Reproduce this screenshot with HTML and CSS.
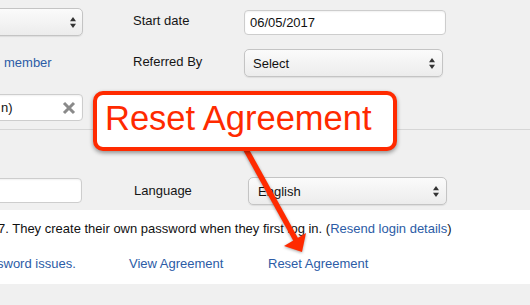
FILE: index.html
```html
<!DOCTYPE html>
<html>
<head>
	<title>Member details</title>
	<link rel="stylesheet" href="styles.css">
</head>
<body>
	<div class="form form-top">
		<div class="row row-1">
			<div class="select select-left">
				<span></span>
				<svg class="updown" width="6" height="11" viewBox="0 0 6 11"><polygon points="0,4.2 3,0 6,4.2"/><polygon points="0,6.8 3,11 6,6.8"/></svg>
			</div>
			<label class="label">Start date</label>
			<div class="input input-date">06/05/2017</div>
		</div>
		<div class="row row-2">
			<a href="#" class="link link-member">member</a>
			<label class="label">Referred By</label>
			<div class="select select-ref">
				<span>Select</span>
				<svg class="updown" width="6" height="11" viewBox="0 0 6 11"><polygon points="0,4.2 3,0 6,4.2"/><polygon points="0,6.8 3,11 6,6.8"/></svg>
			</div>
		</div>
		<div class="row row-3">
			<div class="input input-search">
				<span>n)</span>
				<svg class="clear" width="14" height="14" viewBox="0 0 14 14"><path d="M2 2 L12 12 M12 2 L2 12"/></svg>
			</div>
		</div>
	</div>

	<div class="divider"></div>

	<div class="form form-bottom">
		<div class="row row-4">
			<div class="input input-left"></div>
			<label class="label">Language</label>
			<div class="select select-lang">
				<span>English</span>
				<svg class="updown" width="6" height="11" viewBox="0 0 6 11"><polygon points="0,4.2 3,0 6,4.2"/><polygon points="0,6.8 3,11 6,6.8"/></svg>
			</div>
		</div>
	</div>

	<div class="info">
		<p class="note">7. They create their own password when they first log in. (<a href="#" class="link">Resend login details</a>)</p>
		<div class="links">
			<a href="#" class="link">sword issues.</a>
			<a href="#" class="link">View Agreement</a>
			<a href="#" class="link">Reset Agreement</a>
		</div>
	</div>

	<svg class="arrow" width="530" height="305" viewBox="0 0 530 305">
		<line x1="244" y1="146" x2="296" y2="240" stroke="#ff2a00" stroke-width="5.5"/>
		<polygon points="302,252 284,246 306,233" fill="#ff2a00"/>
	</svg>
	<div class="callout">Reset Agreement</div>
</body>
</html>
```

FILE: styles.css
```css
* {
	box-sizing: border-box;
}
body {
	margin: 0;
	background-color: #f0f0f0;
	font-family: "Liberation Sans", Arial, sans-serif;
	font-size: 13px;
	color: #151515;
	overflow: hidden;
}
.form-top {
	padding-top: 8px;
}
.row {
	display: grid;
	grid-template-columns: 83px 161px 202px;
	align-items: start;
}
.label {
	padding-left: 50px;
	line-height: 16px;
}
.link {
	color: #2c5ca6;
	text-decoration: none;
	line-height: 16px;
}
.input {
	height: 25px;
	border: 1px solid #cdcdcd;
	border-radius: 4px;
	background-color: #fff;
	box-shadow: inset 0 1px 2px rgba(0, 0, 0, 0.06);
	padding-left: 5px;
	line-height: 23px;
	color: #111;
}
.select {
	display: flex;
	align-items: center;
	justify-content: space-between;
	height: 28px;
	border: 1px solid #c4c4c4;
	border-radius: 5px;
	background: linear-gradient(#fbfbfb, #ececec);
	box-shadow: 0 1px 1px rgba(0, 0, 0, 0.08);
	padding: 0 7px 0 8px;
	color: #111;
}
.updown {
	fill: #333;
}

.row-1 .label {
	margin-top: 5px;
}
.select-left {
	width: calc(100% + 10px);
	margin-left: -10px;
	padding-right: 6px;
}
.input-date {
	margin-top: 2px;
}

.row-2 {
	margin-top: 13px;
}
.row-2 .label {
	margin-top: 5px;
}
.link-member {
	margin-top: 6px;
	padding-left: 4px;
}
.select-ref {
	width: 199px;
}

.row-3 {
	margin-top: 17px;
}
.input-search {
	display: flex;
	align-items: center;
	justify-content: space-between;
	height: 27px;
	width: calc(100% + 10px);
	margin-left: -10px;
	padding: 0 6px 0 10px;
}
.clear {
	stroke: #8a8a8a;
	stroke-width: 3;
}

.divider {
	margin-top: 8px;
	border-top: 1px solid #d6d6d6;
}

.form-bottom {
	padding: 47px 0 5px;
}
.row-4 {
	grid-template-columns: 82px 166px 199px;
}
.row-4 .label {
	padding-left: 52px;
	margin-top: 6px;
}
.input-left {
	width: calc(100% + 10px);
	margin: 1px 0 0 -10px;
}
.select-lang {
	padding-left: 9px;
}

.info {
	background-color: #fff;
	height: 74px;
	padding-top: 11px;
}
.note {
	margin: 0 0 0 -2px;
	line-height: 16px;
	color: #111;
	white-space: nowrap;
}
.links {
	display: grid;
	grid-template-columns: 132px 139px auto;
	margin: 19px 0 0 -3px;
}

.arrow {
	position: absolute;
	left: 0;
	top: 0;
	pointer-events: none;
	filter: drop-shadow(0 1px 1.5px rgba(0, 0, 0, 0.35));
}
.callout {
	position: absolute;
	left: 93px;
	top: 91px;
	width: 304px;
	height: 60px;
	border: 4px solid #ff2a00;
	border-radius: 10px;
	background-color: #fff;
	box-shadow: 0 2px 4px rgba(0, 0, 0, 0.4);
	padding-left: 8px;
	font-size: 34.5px;
	line-height: 46px;
	color: #ff2a00;
	white-space: nowrap;
}
```
